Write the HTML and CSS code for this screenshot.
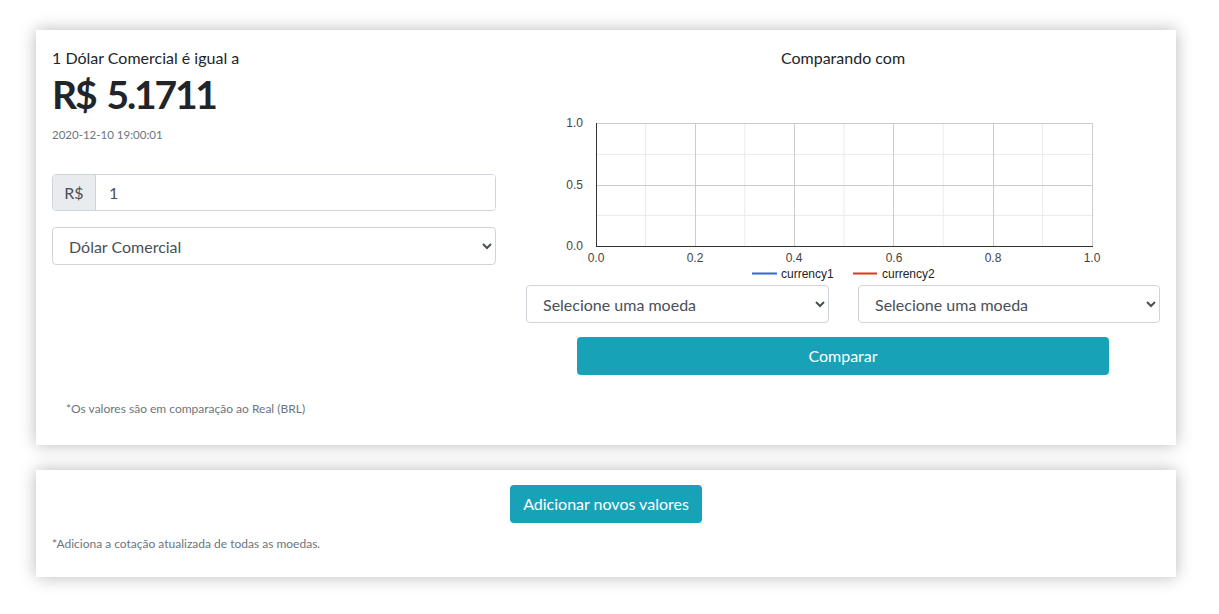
FILE: index.html
```html
<!DOCTYPE html>
<html lang="pt-BR">
<head>
<meta charset="utf-8">
<title>Cotação</title>
<link rel="stylesheet" href="styles.css">
</head>
<body>
<main class="page">
  <section class="card card-main">
    <div class="grid">
      <div class="col-left">
        <p class="lead">1 Dólar Comercial é igual a</p>
        <h1 class="value">R$ 5.1711</h1>
        <p class="date">2020-12-10 19:00:01</p>
        <div class="input-group">
          <span class="prefix">R$</span>
          <input class="amount" type="text" value="1">
        </div>
        <select class="form-select">
          <option>Dólar Comercial</option>
        </select>
      </div>
      <div class="col-right">
        <p class="title">Comparando com</p>
        <svg class="chart" width="634" height="212" viewBox="0 0 634 212">
          <g stroke="#ebebeb" stroke-width="1">
            <line x1="119.6" y1="53" x2="119.6" y2="176"/>
            <line x1="218.8" y1="53" x2="218.8" y2="176"/>
            <line x1="318" y1="53" x2="318" y2="176"/>
            <line x1="417.2" y1="53" x2="417.2" y2="176"/>
            <line x1="516.4" y1="53" x2="516.4" y2="176"/>
            <line x1="70" y1="84.5" x2="566" y2="84.5"/>
            <line x1="70" y1="145.5" x2="566" y2="145.5"/>
          </g>
          <g stroke="#cccccc" stroke-width="1">
            <line x1="169.5" y1="53" x2="169.5" y2="176"/>
            <line x1="268.5" y1="53" x2="268.5" y2="176"/>
            <line x1="367.5" y1="53" x2="367.5" y2="176"/>
            <line x1="467.5" y1="53" x2="467.5" y2="176"/>
            <line x1="566.5" y1="53" x2="566.5" y2="176"/>
            <line x1="70" y1="53.5" x2="566" y2="53.5"/>
            <line x1="70" y1="115.5" x2="566" y2="115.5"/>
          </g>
          <line x1="70.5" y1="53" x2="70.5" y2="176" stroke="#333" stroke-width="1"/>
          <line x1="70" y1="176.5" x2="567" y2="176.5" stroke="#333" stroke-width="1"/>
          <g class="axis" fill="#444" font-family="Liberation Sans, Arial, sans-serif" font-size="12">
            <text x="57" y="57" text-anchor="end">1.0</text>
            <text x="57" y="119" text-anchor="end">0.5</text>
            <text x="57" y="180" text-anchor="end">0.0</text>
            <text x="70" y="192" text-anchor="middle">0.0</text>
            <text x="169" y="192" text-anchor="middle">0.2</text>
            <text x="268" y="192" text-anchor="middle">0.4</text>
            <text x="368" y="192" text-anchor="middle">0.6</text>
            <text x="467" y="192" text-anchor="middle">0.8</text>
            <text x="566" y="192" text-anchor="middle">1.0</text>
          </g>
          <line x1="226" y1="203.5" x2="251" y2="203.5" stroke="#3366cc" stroke-width="2"/>
          <text x="255" y="208" fill="#222" font-family="Liberation Sans, Arial, sans-serif" font-size="12">currency1</text>
          <line x1="327" y1="203.5" x2="351" y2="203.5" stroke="#dc3912" stroke-width="2"/>
          <text x="356" y="208" fill="#222" font-family="Liberation Sans, Arial, sans-serif" font-size="12">currency2</text>
        </svg>
        <div class="select-row">
          <select class="form-select">
            <option>Selecione uma moeda</option>
          </select>
          <select class="form-select">
            <option>Selecione uma moeda</option>
          </select>
        </div>
        <button class="btn btn-wide" type="button">Comparar</button>
      </div>
    </div>
    <p class="note note-indent">*Os valores são em comparação ao Real (BRL)</p>
  </section>

  <section class="card card-add">
    <div class="center">
      <button class="btn" type="button">Adicionar novos valores</button>
    </div>
    <p class="note">*Adiciona a cotação atualizada de todas as moedas.</p>
  </section>
</main>
</body>
</html>
```

FILE: styles.css
```css
* { box-sizing: border-box; }

html, body {
  margin: 0;
  padding: 0;
  background: #ffffff;
}

body {
  font-family: Lato, "Noto Sans", sans-serif;
  color: #212529;
  font-size: 16px;
  line-height: 1.5;
}

.page {
  width: 1140px;
  margin: 30px 0 0 36px;
  padding-bottom: 40px;
  display: flex;
  flex-direction: column;
  gap: 25px;
}

.card {
  background: #fff;
  box-shadow: 0 0 16px rgba(0, 0, 0, 0.28);
}

.card-main {
  padding: 16px 16px 16px 16px;
  height: 415px;
}

.grid {
  display: grid;
  grid-template-columns: 444px 634px;
  column-gap: 30px;
}

.col-left, .col-right {
  display: flex;
  flex-direction: column;
}

.lead, .title {
  margin: 0;
  height: 24px;
  line-height: 24px;
  font-size: 16px;
}

.title { text-align: center; }

.value {
  margin: 0;
  font-size: 39px;
  line-height: 48px;
  font-weight: 700;
  letter-spacing: -2.2px;
  word-spacing: 4px;
}

.date {
  margin: 8px 0 0 0;
  font-size: 11.5px;
  line-height: 18px;
  color: #6c757d;
}

.input-group {
  margin-top: 30px;
  display: flex;
  height: 37px;
  border: 1px solid #ced4da;
  border-radius: 4px;
  overflow: hidden;
}

.prefix {
  width: 43px;
  background: #e9ecef;
  border-right: 1px solid #ced4da;
  color: #495057;
  display: flex;
  align-items: center;
  justify-content: center;
  font-size: 16px;
}

.amount {
  flex: 1;
  border: 0;
  padding: 0 13px;
  font: inherit;
  color: #495057;
  outline: none;
}

.form-select {
  height: 38px;
  border: 1px solid #ced4da;
  border-radius: 4px;
  background: #fff;
  color: #495057;
  font: inherit;
  padding: 0 12px;
}

.col-left .form-select { margin-top: 16px; width: 100%; }

.chart { display: block; }

.select-row {
  margin-top: 3px;
  display: grid;
  grid-template-columns: 303px 302px;
  column-gap: 29px;
}

.select-row .form-select { width: 100%; }

.btn {
  background: #17a2b8;
  color: #fff;
  border: 0;
  border-radius: 4px;
  height: 38px;
  padding: 0 13px;
  font: inherit;
  font-size: 16px;
}

.btn-wide {
  margin: 14px auto 0 auto;
  width: 532px;
}

.note {
  margin: 0;
  font-size: 12px;
  line-height: 18px;
  color: #6c757d;
}

.note-indent {
  margin-top: 25px;
  padding-left: 14px;
}

.card-add {
  padding: 15px 16px 24px 16px;
}

.center {
  display: flex;
  justify-content: center;
}

.card-add .note { margin-top: 12px; }
```
